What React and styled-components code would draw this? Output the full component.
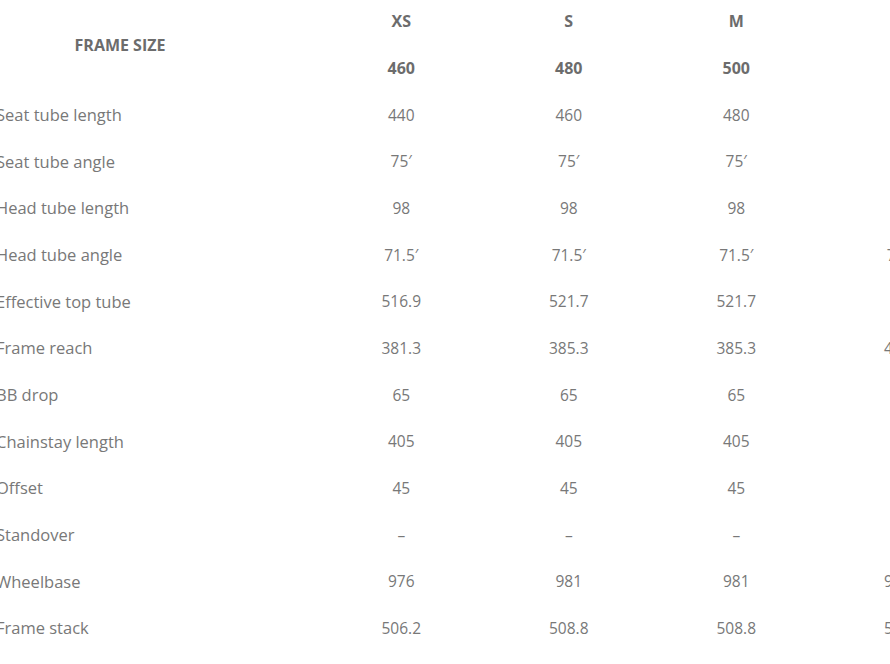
import styled, { createGlobalStyle } from 'styled-components'

const GlobalStyle = createGlobalStyle`
  html, body {
    margin: 0;
    padding: 0;
    background: #fff;
    overflow: hidden;
  }
`;

const Page = styled.div`
  width: 890px;
  height: 664px;
  overflow: hidden;
  font-family: "Open Sans", Lato, sans-serif;
`;

const Table = styled.table`
  margin: -2px 0 0 -4px;
  border-collapse: collapse;
  table-layout: fixed;
  width: 991.5px;
  color: #787878;
`;

const Row = styled.tr`
  height: 46.67px;
`;

const HeadCell = styled.th`
  padding: 0;
  font-weight: 700;
  font-size: 16px;
  color: #6c6c6c;
  text-align: center;
  vertical-align: middle;
`;

const TitleCell = styled(HeadCell)`
  padding-right: 73.5px;
`;

const Label = styled.td`
  padding: 0;
  font-size: 16.5px;
  text-align: left;
  white-space: nowrap;
`;

const Value = styled.td`
  padding: 0;
  font-size: 15.5px;
  text-align: center;
  white-space: nowrap;
`;

const SizeCol = styled.col`
  width: ${props => props.width};
`;

const sizes = [
  { name: 'XS', mm: '460' },
  { name: 'S', mm: '480' },
  { name: 'M', mm: '500' },
  { name: 'L', mm: '520' },
];

const rows = [
  ['Seat tube length', '440', '460', '480', '500'],
  ['Seat tube angle', '75′', '75′', '75′', '74′'],
  ['Head tube length', '98', '98', '98', '113'],
  ['Head tube angle', '71.5′', '71.5′', '71.5′', '72.5′'],
  ['Effective top tube', '516.9', '521.7', '521.7', '536'],
  ['Frame reach', '381.3', '385.3', '385.3', '400.3'],
  ['BB drop', '65', '65', '65', '65'],
  ['Chainstay length', '405', '405', '405', '405'],
  ['Offset', '45', '45', '45', '45'],
  ['Standover', '–', '–', '–', '–'],
  ['Wheelbase', '976', '981', '981', '996.5'],
  ['Frame stack', '506.2', '508.8', '508.8', '528.3'],
];

export default function App() {
  return (
    <Page>
      <GlobalStyle />
      <Table>
        <colgroup>
          <SizeCol width="321.5px" />
          {sizes.map(s => <SizeCol key={s.name} width="167.5px" />)}
        </colgroup>
        <thead>
          <Row>
            <TitleCell rowSpan={2}>FRAME SIZE</TitleCell>
            {sizes.map(s => <HeadCell key={s.name}>{s.name}</HeadCell>)}
          </Row>
          <Row>
            {sizes.map(s => <HeadCell key={s.name}>{s.mm}</HeadCell>)}
          </Row>
        </thead>
        <tbody>
          {rows.map(([label, ...vals]) => (
            <Row key={label}>
              <Label>{label}</Label>
              {vals.map((v, i) => <Value key={i}>{v}</Value>)}
            </Row>
          ))}
        </tbody>
      </Table>
    </Page>
  )
}
